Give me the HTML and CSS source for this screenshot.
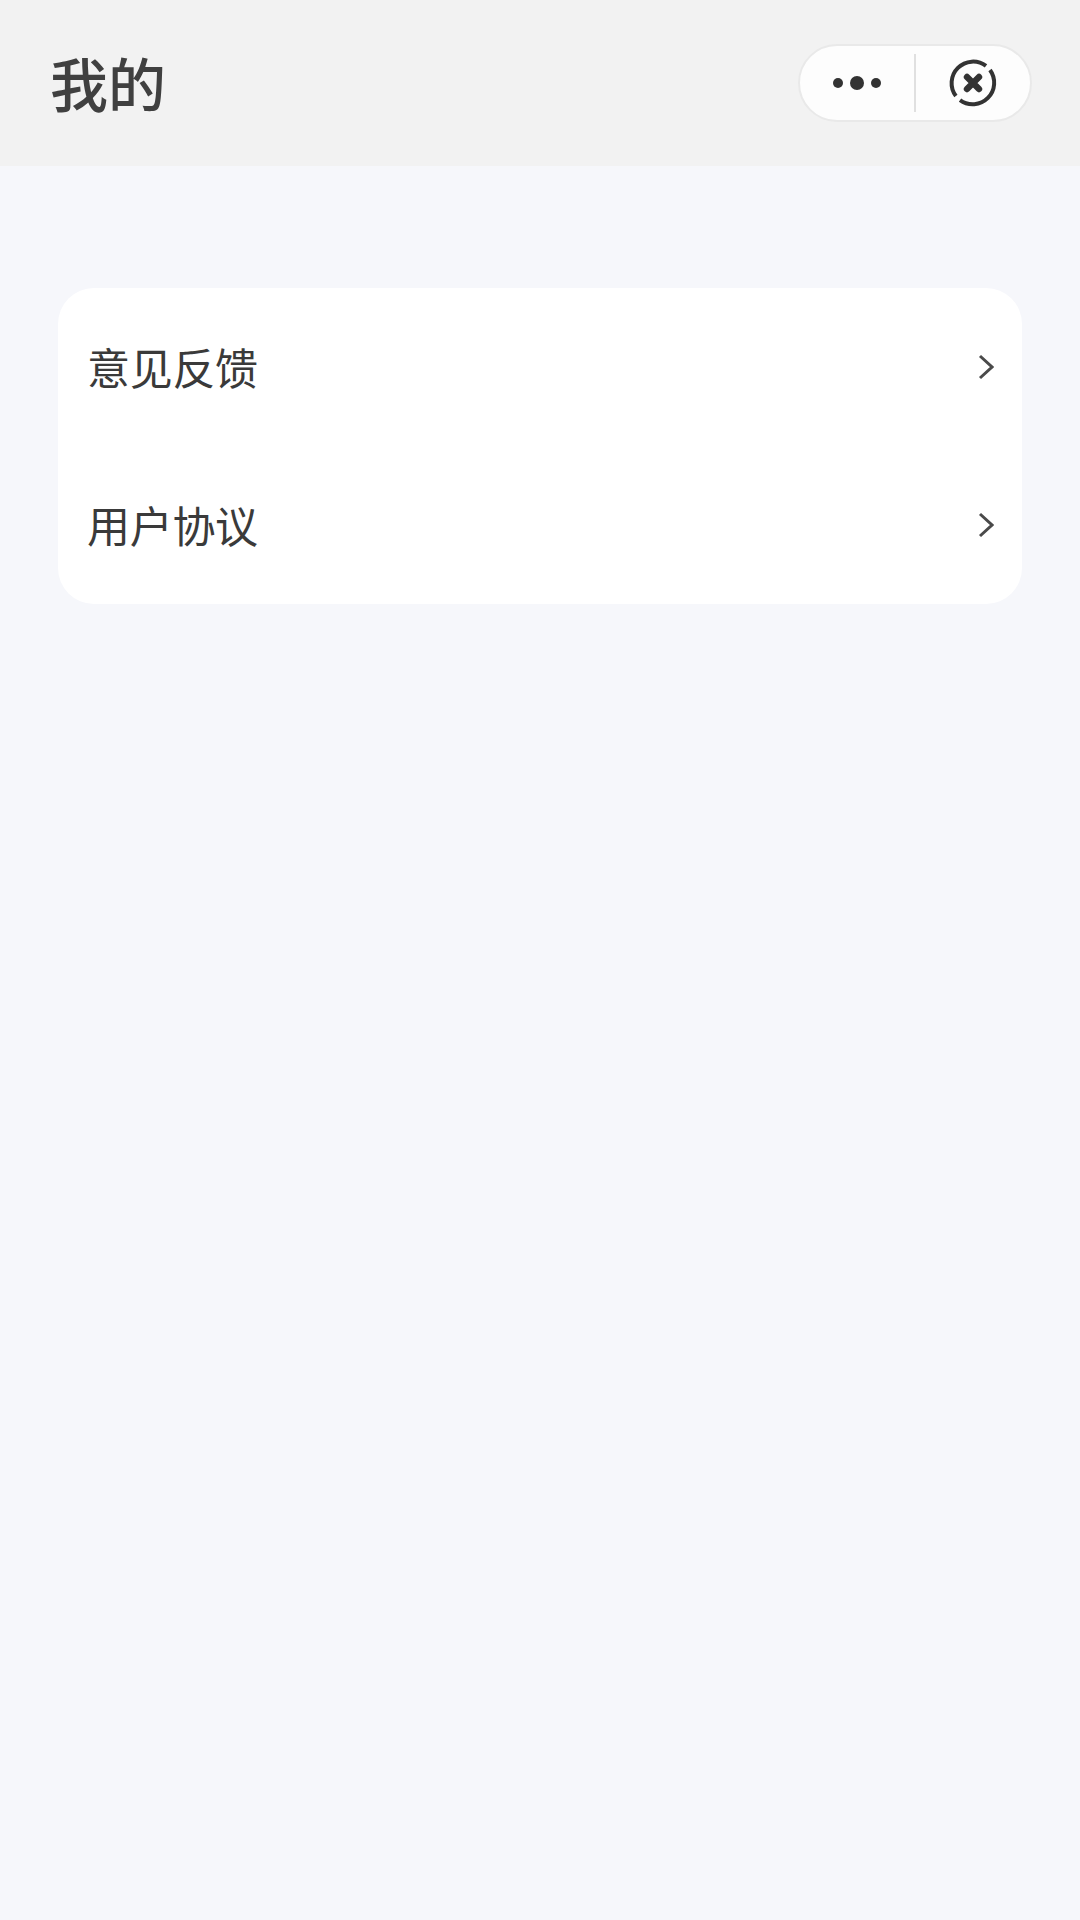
FILE: index.html
```html
<!DOCTYPE html>
<html lang="zh-CN">
<head>
  <meta charset="UTF-8">
  <title>我的</title>
  <link rel="stylesheet" href="styles.css">
</head>
<body>
  <header class="nav-bar">
    <h1 class="nav-title">我的</h1>
    <div class="capsule">
      <div class="capsule-btn">
        <svg class="icon-more" width="50" height="14" viewBox="0 0 50 14">
          <circle cx="6" cy="7" r="5" fill="#333"/>
          <circle cx="25" cy="7" r="7" fill="#333"/>
          <circle cx="44" cy="7" r="5" fill="#333"/>
        </svg>
      </div>
      <div class="capsule-line"></div>
      <div class="capsule-btn">
        <svg class="icon-close" width="48" height="48" viewBox="0 0 48 48" fill="none" stroke="#333">
          <path stroke-width="4" d="M41 11 A21.5 21.5 0 0 1 11 41.1"/>
          <path stroke-width="4" d="M6.9 37 A21.5 21.5 0 0 1 37 6.9"/>
          <path stroke-width="6.4" stroke-linecap="round" d="M18 18 L30 30 M30 18 L18 30"/>
        </svg>
      </div>
    </div>
  </header>

  <main class="page">
    <ul class="menu">
      <li class="menu-item">
        <span class="menu-text">意见反馈</span>
        <svg width="16" height="26" viewBox="0 0 16 26" fill="none" stroke="#4a4a4a" stroke-width="3"><path d="M2 2 L14 13 L2 24"/></svg>
      </li>
      <li class="menu-item">
        <span class="menu-text">用户协议</span>
        <svg width="16" height="26" viewBox="0 0 16 26" fill="none" stroke="#4a4a4a" stroke-width="3"><path d="M2 2 L14 13 L2 24"/></svg>
      </li>
    </ul>
  </main>
</body>
</html>
```

FILE: styles.css
```css
* {
  box-sizing: border-box;
}

body {
  margin: 0;
  height: 1920px;
  overflow: hidden;
  background-color: #f6f7fb;
  font-family: "Noto Sans CJK SC", "Noto Sans", sans-serif;
}

.nav-bar {
  display: flex;
  justify-content: space-between;
  align-items: center;
  height: 166px;
  padding: 0 48px 0 50px;
  background-color: #f2f2f2;
}

.nav-title {
  margin: 0 0 3px;
  font-size: 58px;
  font-weight: 500;
  line-height: 1;
  color: #404040;
}

.capsule {
  display: flex;
  align-items: center;
  width: 234px;
  height: 78px;
  background-color: #fdfdfd;
  border: 2px solid #e9e9e9;
  border-radius: 39px;
}

.capsule-btn {
  flex: 1;
  display: flex;
  justify-content: center;
  align-items: center;
}

.capsule-line {
  width: 2px;
  height: 58px;
  background-color: #e0e0e0;
}

.page {
  padding: 122px 58px 0;
}

.menu {
  margin: 0;
  padding: 0;
  list-style: none;
  background-color: #fff;
  border-radius: 36px;
}

.menu-item {
  display: flex;
  justify-content: space-between;
  align-items: center;
  height: 158px;
  padding: 0 28px 0 29px;
  font-size: 43px;
  color: #3a3a3a;
}

.menu-text {
  margin-bottom: 2px;
  letter-spacing: -0.3px;
}
```
